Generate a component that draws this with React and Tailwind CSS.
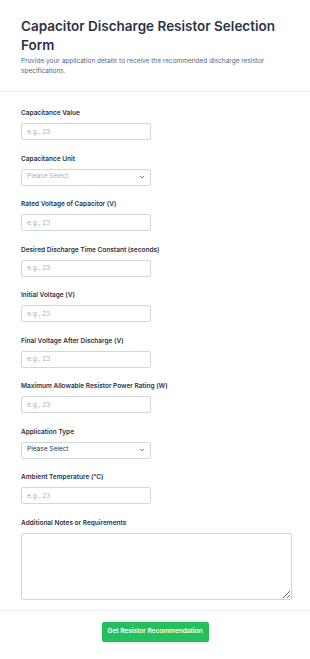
import React from 'react';

const fields = [
    { label: 'Capacitance Value', type: 'input' },
    { label: 'Capacitance Unit', type: 'select', muted: true },
    { label: 'Rated Voltage of Capacitor (V)', type: 'input' },
    { label: 'Desired Discharge Time Constant (seconds)', type: 'input' },
    { label: 'Initial Voltage (V)', type: 'input' },
    { label: 'Final Voltage After Discharge (V)', type: 'input' },
    { label: 'Maximum Allowable Resistor Power Rating (W)', type: 'input' },
    { label: 'Application Type', type: 'select' },
    { label: 'Ambient Temperature (°C)', type: 'input' },
];

const Chevron = () => (
    <svg className="w-[6px] h-[6px]" viewBox="0 0 10 10" fill="none" stroke="#57647e" strokeWidth="1.6" strokeLinecap="round" strokeLinejoin="round">
        <path d="M2.5 4 L5 6.5 L7.5 4" />
    </svg>
);

const Field = ({ label, type, muted }) => (
    <div className="flex flex-col gap-[5px]">
        <label className="text-[6.5px] leading-[9px] font-semibold text-[#2c3345]">{label}</label>
        {type === 'input' ? (
            <input
                placeholder="e.g., 23"
                className="w-[130px] h-[17px] border border-[#d3d6dd] rounded-[2px] px-[5px] text-[6.5px] text-[#2c3345] placeholder:text-[#a8aebb] outline-none bg-white"
            />
        ) : (
            <div className="w-[130px] h-[17px] border border-[#d3d6dd] rounded-[2px] px-[5px] flex items-center justify-between bg-white">
                <span className={`text-[6.5px] ${muted ? 'text-[#a8aebb]' : 'text-[#2c3345]'}`}>Please Select</span>
                <Chevron />
            </div>
        )}
    </div>
);

export default function App() {
    return (
        <div className="w-[310px] h-[659px] bg-white font-['Inter',sans-serif] overflow-hidden">
            {/* Header */}
            <div className="px-[21px] pt-[17px] pb-[15px] border-b border-[#eff0f3]">
                <h1 className="text-[13.5px] leading-[18.5px] font-semibold text-[#2c3345]">
                    Capacitor Discharge Resistor Selection Form
                </h1>
                <p className="mt-[2px] text-[6.5px] leading-[10px] text-[#57647e]">
                    Provide your application details to receive the recommended discharge resistor specifications.
                </p>
            </div>

            {/* Fields */}
            <div className="px-[21px] pt-[17px] flex flex-col gap-[14.5px]">
                {fields.map((f) => (
                    <Field key={f.label} {...f} />
                ))}
                <div className="flex flex-col gap-[5px]">
                    <label className="text-[6.5px] leading-[9px] font-semibold text-[#2c3345]">Additional Notes or Requirements</label>
                    <textarea className="block w-[271px] h-[67px] border border-[#d3d6dd] rounded-[2px] outline-none resize-y" />
                </div>
            </div>

            {/* Submit */}
            <div className="mt-[10px] border-t border-[#eff0f3] flex justify-center pt-[11px]">
                <button className="w-[107px] h-[20px] bg-[#22c15e] rounded-[2px] text-white text-[6.5px] font-semibold">
                    Get Resistor Recommendation
                </button>
            </div>
        </div>
    );
}
